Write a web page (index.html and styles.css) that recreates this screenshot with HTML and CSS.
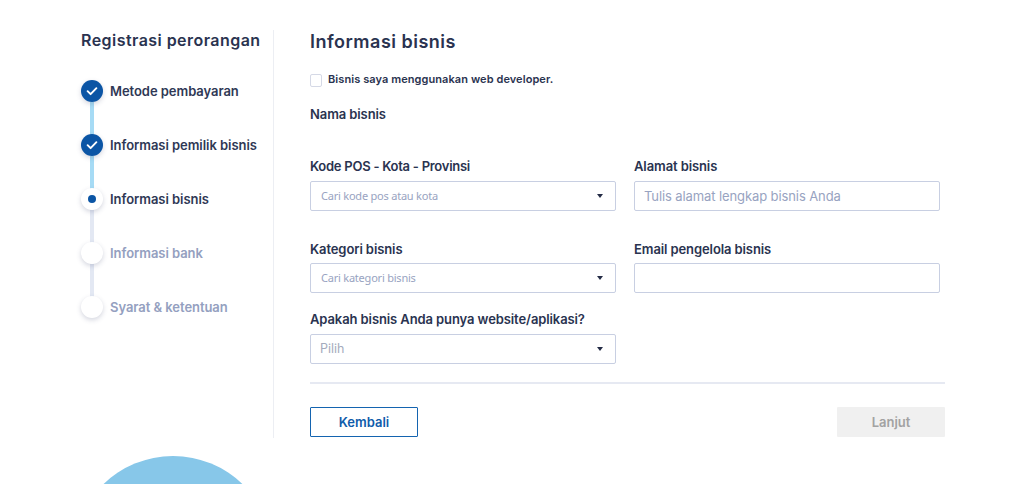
FILE: index.html
```html
<!DOCTYPE html>
<html lang="id">
<head>
<meta charset="utf-8">
<title>Registrasi perorangan</title>
<link rel="stylesheet" href="styles.css">
</head>
<body>
<div class="page">
  <aside class="sidebar">
    <h2 class="side-title">Registrasi perorangan</h2>
    <ol class="steps">
      <li class="step done">
        <span class="dot"><svg viewBox="0 0 22 22" width="22" height="22"><path d="M6.6 11.2l3 3 5.8-6" fill="none" stroke="#fff" stroke-width="1.9" stroke-linecap="round" stroke-linejoin="round"/></svg></span>
        <span class="step-label">Metode pembayaran</span>
      </li>
      <li class="step done">
        <span class="dot"><svg viewBox="0 0 22 22" width="22" height="22"><path d="M6.6 11.2l3 3 5.8-6" fill="none" stroke="#fff" stroke-width="1.9" stroke-linecap="round" stroke-linejoin="round"/></svg></span>
        <span class="step-label">Informasi pemilik bisnis</span>
      </li>
      <li class="step current">
        <span class="dot"><span class="inner"></span></span>
        <span class="step-label">Informasi bisnis</span>
      </li>
      <li class="step todo">
        <span class="dot"></span>
        <span class="step-label">Informasi bank</span>
      </li>
      <li class="step todo last">
        <span class="dot"></span>
        <span class="step-label">Syarat &amp; ketentuan</span>
      </li>
    </ol>
  </aside>
  <main class="main">
    <h1 class="title">Informasi bisnis</h1>
    <label class="check"><span class="box"></span><span>Bisnis saya menggunakan web developer.</span></label>
    <div class="label nama">Nama bisnis</div>
    <div class="grid">
      <div class="field">
        <div class="label kode">Kode POS - Kota - Provinsi</div>
        <div class="control select search"><span>Cari kode pos atau kota</span><i class="caret"></i></div>
      </div>
      <div class="field">
        <div class="label">Alamat bisnis</div>
        <div class="control text">Tulis alamat lengkap bisnis Anda</div>
      </div>
      <div class="field row2">
        <div class="label">Kategori bisnis</div>
        <div class="control select search"><span>Cari kategori bisnis</span><i class="caret"></i></div>
      </div>
      <div class="field row2">
        <div class="label">Email pengelola bisnis</div>
        <div class="control text"></div>
      </div>
      <div class="field tight">
        <div class="label">Apakah bisnis Anda punya website/aplikasi?</div>
        <div class="control select pilih"><span>Pilih</span><i class="caret"></i></div>
      </div>
    </div>
    <hr class="divider">
    <div class="actions">
      <button class="btn back" type="button">Kembali</button>
      <button class="btn next" type="button">Lanjut</button>
    </div>
  </main>
</div>
<div class="blob-clip"><div class="blob"></div></div>
</body>
</html>
```
FILE: styles.css
```css
* { box-sizing: border-box; }
html, body { margin: 0; height: 484px; overflow: hidden; background: #fff; }
body { font-family: "Inter", "Liberation Sans", sans-serif; color: #232b45; position: relative; }
.page { display: flex; padding: 30px 0 0 81px; }
.sidebar { width: 193px; height: 408px; border-right: 1px solid #eceef3; }
.side-title { margin: 0; font-size: 16px; line-height: 20px; font-weight: 600; letter-spacing: .45px; color: #2a3350; }
.steps { list-style: none; margin: 14px 0 0; padding: 0; }
.step { position: relative; display: flex; align-items: center; gap: 7px; height: 54px; }
.step:not(.last)::after { content: ""; position: absolute; left: 9px; top: 38px; width: 4px; height: 38px; background: #e3e8f3; }
.step.done::after { background: #a6dbf5; }
.dot { position: relative; z-index: 1; width: 22px; height: 22px; border-radius: 50%; background: #fff; box-shadow: 0 2px 5px rgba(60,70,110,.22); display: flex; align-items: center; justify-content: center; }
.done .dot { background: #0b55a5; }
.inner { width: 8px; height: 8px; border-radius: 50%; background: #0b55a5; }
.step-label { font-size: 13px; font-weight: 600; letter-spacing: -.05px; color: #2f3855; }
.todo .step-label { color: #94a0c0; }
.main { width: 635px; margin-left: 36px; }
.title { margin: 0; height: 24px; font-size: 18px; line-height: 24px; font-weight: 600; letter-spacing: .5px; color: #2a3350; }
.check { display: flex; align-items: flex-start; gap: 6px; margin-top: 18px; font-size: 11px; line-height: 14px; font-weight: 600; letter-spacing: .08px; color: #2a3350; height: 18px; }
.box { width: 12px; height: 13px; margin-top: 2px; border: 1px solid #d5d9e6; border-radius: 2px; }
.label { font-size: 13px; line-height: 18px; font-weight: 600; letter-spacing: -.1px; color: #2a3350; }
.label.kode { letter-spacing: -.26px; }
.nama { margin-top: 15px; }
.grid { display: grid; grid-template-columns: 306px 306px; column-gap: 18px; margin-top: 34px; }
.field { height: 83px; }
.field .label { height: 18px; margin-bottom: 6px; }
.field.row2 .label { margin-bottom: 5px; }
.field.tight { height: 54px; margin-top: -13px; }
.field.tight .label { margin-bottom: 6px; }
.control { height: 30px; border: 1px solid #c8cfe2; border-radius: 2px; display: flex; align-items: center; color: #98a3c1; background: #fff; }
.select { justify-content: space-between; padding-right: 12px; }
.search { padding-left: 10px; padding-bottom: 2px; font-family: "Noto Sans", sans-serif; font-size: 11px; letter-spacing: -.22px; }
.pilih { padding-left: 9px; padding-bottom: 2px; font-size: 12.5px; color: #a4abbd; }
.text { padding-left: 9px; font-size: 13px; letter-spacing: -.1px; }
.caret { width: 0; height: 0; margin-top: 1px; border-left: 3px solid transparent; border-right: 3px solid transparent; border-top: 4px solid #232b45; }
.divider { margin: 18px 0 0; border: 0; height: 2px; background: #e6e9f2; }
.actions { display: flex; justify-content: space-between; margin-top: 23px; }
.btn { width: 108px; height: 30px; font-family: inherit; font-size: 13px; font-weight: 600; border-radius: 1px; padding: 0; }
.back { background: #fff; border: 1px solid #1464b0; color: #0f5cab; }
.next { background: #f0f0f0; border: 0; color: #a2a2a2; }
.blob-clip { position: absolute; left: 73px; top: 456px; width: 200px; height: 28px; overflow: hidden; }
.blob { width: 200px; height: 200px; border-radius: 50%; background: #87c7e9; }
```
